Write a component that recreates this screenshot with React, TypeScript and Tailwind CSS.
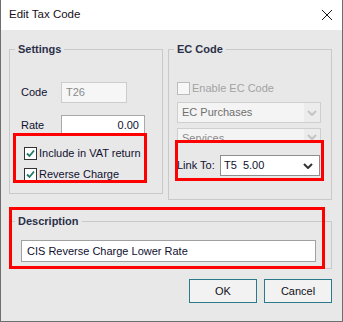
import React from "react";

const font = { fontFamily: '"Liberation Sans", Arial, sans-serif' };

function Chevron({ color }: { color: string }) {
  return (
    <svg width="10" height="6" viewBox="0 0 10 6">
      <path d="M1 1 L5 5 L9 1" fill="none" stroke={color} strokeWidth="2" />
    </svg>
  );
}

function Check({ checked, disabled }: { checked?: boolean; disabled?: boolean }) {
  return (
    <div
      className={
        "w-[13px] h-[13px] border flex items-center justify-center " +
        (disabled ? "border-[#bcbcbc] bg-[#f7f7f7]" : "border-[#333333] bg-white")
      }
    >
      {checked && (
        <svg width="9" height="9" viewBox="0 0 9 9">
          <path d="M1 4.5 L3.5 7 L8 1.5" fill="none" stroke="#1e7a66" strokeWidth="1.8" />
        </svg>
      )}
    </div>
  );
}

function Group({
  title,
  className,
  children,
}: {
  title: string;
  className: string;
  children: React.ReactNode;
}) {
  return (
    <div className={"relative border border-[#c9c9c9] " + className}>
      <span className="absolute -top-[8px] left-[5px] px-[3px] bg-[#e8e8e8] text-[11px] leading-[14px] font-bold text-[#2b3048]">
        {title}
      </span>
      {children}
    </div>
  );
}

export default function App() {
  return (
    <div
      style={font}
      className="w-[343px] h-[322px] flex flex-col border-x border-b border-[#6e6e6e] bg-[#e8e8e8] text-[11px] text-[#101030]"
    >
      <div className="h-[30px] shrink-0 bg-white flex items-center justify-between pl-[8px] pr-[10px]">
        <span className="text-[11.5px] text-[#1a1020]">Edit Tax Code</span>
        <svg width="10" height="10" viewBox="0 0 10 10">
          <path d="M0 0 L10 10 M10 0 L0 10" stroke="#1a1a1a" strokeWidth="1" />
        </svg>
      </div>
      <div className="relative flex flex-col px-[8px] pt-[19px]">
        <div className="flex items-start gap-[5px]">
          <Group title="Settings" className="w-[154px] h-[145px] pt-[32px] pl-[11px] flex flex-col">
            <div className="h-[21px] flex items-center">
              <span className="w-[40px]">Code</span>
              <div className="w-[66px] h-[21px] border border-[#cccccc] bg-[#f6f6f6] flex items-center pl-[4px] text-[#8a8a8a]">
                T26
              </div>
            </div>
            <div className="h-[20px] mt-[12px] flex items-center">
              <span className="w-[40px]">Rate</span>
              <div className="w-[84px] h-[20px] border border-[#a9a9a9] bg-white flex items-center justify-end pr-[5px]">
                0.00
              </div>
            </div>
            <div className="h-[16px] mt-[10px] flex items-center pl-[3px] gap-[2px]">
              <Check checked />
              <span>Include in VAT return</span>
            </div>
            <div className="h-[16px] mt-[5px] flex items-center pl-[3px] gap-[2px]">
              <Check checked />
              <span>Reverse Charge</span>
            </div>
          </Group>
          <Group title="EC Code" className="w-[164px] h-[151px] pt-[30px] pl-[8px] flex flex-col">
            <div className="h-[16px] flex items-center gap-[2px]">
              <Check disabled />
              <span className="text-[#a3a3a3]">Enable EC Code</span>
            </div>
            <div className="mt-[6px] w-[144px] h-[21px] border border-[#cfcfcf] bg-[#f4f4f4] flex items-center justify-between pl-[4px] text-[#6f6f6f]">
              <span>EC Purchases</span>
              <div className="w-[16px] h-[19px] bg-[#ececec] flex items-center justify-center">
                <Chevron color="#c4c4c4" />
              </div>
            </div>
            <div className="mt-[5px] w-[144px] h-[14px] border-x border-t border-[#cfcfcf] bg-[#f4f4f4] flex items-start justify-between pl-[4px] pt-[3px] text-[#8a8a8a] overflow-hidden">
              <span className="leading-[13px]">Services</span>
              <div className="w-[16px] h-[19px] -mt-[3px] bg-[#ececec] flex items-start pt-[5px] justify-center">
                <Chevron color="#c4c4c4" />
              </div>
            </div>
            <div className="mt-[13px] flex items-center">
              <span className="w-[43px]">Link To:</span>
              <div className="w-[100px] h-[21px] border border-[#8e8e8e] bg-white flex items-center justify-between pl-[3px] pr-[6px]">
                <span className="whitespace-pre">T5  5.00</span>
                <Chevron color="#333333" />
              </div>
            </div>
          </Group>
        </div>
        <Group title="Description" className="mt-[21px] w-[323px] h-[48px] pt-[18px] pl-[11px]">
          <div className="w-[295px] h-[22px] border border-[#a0a0a0] bg-white flex items-center pl-[5px]">
            CIS Reverse Charge Lower Rate
          </div>
        </Group>
        <div className="mt-[10px] flex justify-end gap-[7px] pr-[2px]">
          <button className="w-[68px] h-[24px] border border-[#2a7a8c] bg-[#f2f2f2] text-[11px] text-[#101020]">
            OK
          </button>
          <button className="w-[68px] h-[24px] border border-[#2a7a8c] bg-[#f2f2f2] text-[11px] text-[#101020]">
            Cancel
          </button>
        </div>
        <div className="absolute left-[12px] top-[103px] w-[134px] h-[50px] border-[3px] border-[#ff0000]" />
        <div className="absolute left-[174px] top-[110px] w-[149px] h-[41px] border-[3px] border-[#ff0000]" />
        <div className="absolute left-[8px] top-[177px] w-[316px] h-[62px] border-[3px] border-[#ff0000]" />
      </div>
    </div>
  );
}
